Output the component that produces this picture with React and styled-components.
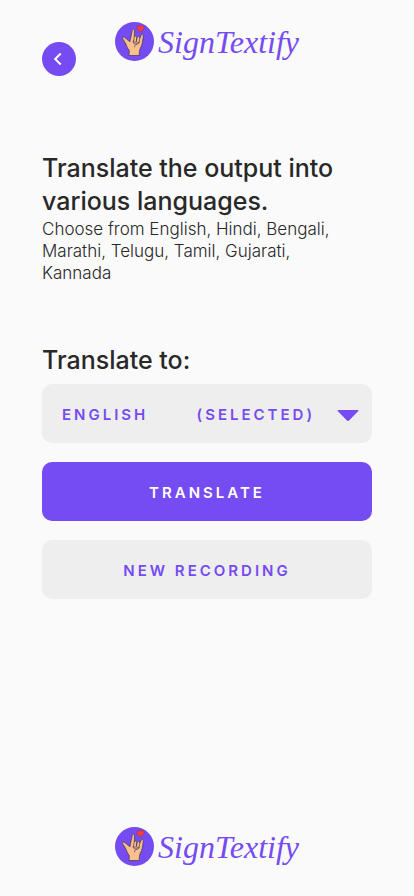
import React from "react";
import styled, { createGlobalStyle } from "styled-components";

const violet = "#754bf2";

const GlobalStyle = createGlobalStyle`
  *, *::before, *::after { box-sizing: border-box; }
  body {
    margin: 0;
    background: #fafafa;
    color: #282828;
    font-family: Inter, "Open Sans", sans-serif;
  }
`;

const Page = styled.div`
  display: flex;
  flex-direction: column;
  min-height: 100vh;
  padding: 22px 42px 30px;
`;

const Header = styled.header`
  display: grid;
  min-height: 54px;
  margin-bottom: 76px;

  > * { grid-area: 1 / 1; }
`;

const BackButton = styled.button`
  display: grid;
  place-items: center;
  align-self: end;
  width: 34px;
  height: 34px;
  padding: 0;
  border: 0;
  border-radius: 50%;
  background: ${violet};
  cursor: pointer;
`;

const Brand = styled.div`
  display: flex;
  align-items: center;
  justify-content: center;
  align-self: start;
  gap: 4px;
  height: 39px;
`;

const Wordmark = styled.span`
  color: ${violet};
  font-family: "Liberation Serif", serif;
  font-size: 32px;
  font-style: italic;
  line-height: 40px;
`;

const Main = styled.main`
  display: flex;
  flex-direction: column;
`;

const Heading = styled.h1`
  margin: 0;
  font-size: 25px;
  font-weight: 500;
  line-height: 33px;
`;

const Description = styled.p`
  margin: 0 0 60px;
  padding-right: 20px;
  font-size: 17px;
  font-weight: 300;
  line-height: 22px;
`;

const FieldLabel = styled.label`
  margin-bottom: 7px;
  font-size: 25px;
  font-weight: 500;
  line-height: 33px;
`;

const Controls = styled.div`
  display: grid;
  gap: 19px;
`;

const Field = styled.div`
  display: grid;
  align-items: center;

  > * { grid-area: 1 / 1; }
`;

const LanguageSelect = styled.select`
  width: 100%;
  height: 59px;
  padding: 2px 20px 0;
  appearance: none;
  border: 0;
  border-radius: 10px;
  background: #eeeeee;
  color: ${violet};
  font: 600 15px/20px Inter, sans-serif;
  letter-spacing: 3px;
  text-transform: uppercase;
  cursor: pointer;
`;

const FieldStatus = styled.div`
  display: flex;
  align-items: center;
  justify-self: end;
  gap: 22px;
  padding: 2px 13px 0 0;
  color: ${violet};
  font-size: 15px;
  font-weight: 600;
  line-height: 20px;
  letter-spacing: 3px;
  pointer-events: none;
`;

const Button = styled.button`
  height: 59px;
  padding: 2px 20px 0;
  border: 0;
  border-radius: 10px;
  background: ${({ $primary }) => ($primary ? violet : "#eeeeee")};
  color: ${({ $primary }) => ($primary ? "#ffffff" : violet)};
  font: 600 15px/20px Inter, sans-serif;
  letter-spacing: 3px;
  text-transform: uppercase;
  cursor: pointer;
`;

const Footer = styled.footer`
  margin-top: auto;
`;

const languages = ["English", "Hindi", "Bengali", "Marathi", "Telugu", "Tamil", "Gujarati", "Kannada"];

function HandMark() {
  return (
    <svg width="39" height="39" viewBox="0 0 39 39" aria-hidden="true">
      <circle cx="19.5" cy="19.5" r="19.5" fill={violet} />
      <path
        d="M14 33.500L14.300 28.500C12.500 26.200 11.700 24.200 10.800 21.800L7.700 16.700C7.100 15.300 8.600 14.500 9.700 15.500L14.900 19.800L17.300 8.300C17.700 6.800 19.600 7.100 19.500 8.500L19.300 14.500C20.200 13.700 21.500 14 22 15C23 14.200 24.500 14.600 24.900 15.900L26.300 12.900C27 11.700 28.600 12.300 28.300 13.700C27.800 17.500 27.600 22.500 25.300 26.200C24.400 28 24.200 30.500 24.300 33.500Z"
        fill="#f7c08d"
        stroke="#4a3048"
        strokeWidth=".7"
        strokeLinejoin="round"
      />
      <path
        d="M19.300 14.500l-.8 4.700c.2 1.500 2.200 1.500 2.700.1l.8-4.300-.5 4.800c.3 1.500 2.300 1.400 2.700 0l.7-3.900M18.300 19c-.7 1.700.2 2.700 1.700 2.900l1.700.2c-1.500.7-2 1.700-2.100 2.800M24.200 19.800c.2 1.600-.7 2.500-2.500 2.300"
        fill="none"
        stroke="#4a3048"
        strokeWidth=".7"
        strokeLinecap="round"
        strokeLinejoin="round"
      />
      <path
        d="M25.500 9.800C23.200 8.900 21.300 7.300 21.900 5.200C22.500 3.300 24.700 3.100 25.500 4.200C26.500 2.600 29 3 29.100 5.300C29.200 7.300 27.400 9 25.500 9.800Z"
        fill="#f23d43"
        stroke="#7d2b58"
        strokeWidth=".4"
      />
    </svg>
  );
}

function Logo() {
  return (
    <Brand>
      <HandMark />
      <Wordmark>SignTextify</Wordmark>
    </Brand>
  );
}

export default function App() {
  return (
    <>
      <GlobalStyle />
      <Page>
        <Header>
          <Logo />
          <BackButton type="button" aria-label="Back">
            <svg width="34" height="34" viewBox="0 0 34 34" aria-hidden="true">
              <path d="M18.700 11.500L13.200 17l5.500 5.500" fill="none" stroke="#fff" strokeWidth="2" />
            </svg>
          </BackButton>
        </Header>
        <Main>
          <Heading>Translate the output into various languages.</Heading>
          <Description>
            Choose from English, Hindi, Bengali, Marathi, Telugu, Tamil, Gujarati, Kannada
          </Description>
          <FieldLabel htmlFor="language">Translate to:</FieldLabel>
          <Controls>
            <Field>
              <LanguageSelect id="language" defaultValue="English">
                {languages.map((name) => (
                  <option key={name}>{name}</option>
                ))}
              </LanguageSelect>
              <FieldStatus>
                <span>(SELECTED)</span>
                <svg width="22" height="14" viewBox="0 0 22 14" aria-hidden="true">
                  <path d="M1 2h20q1 0 .3 1L12.300 12.300q-1.300 1.200-2.600 0L.7 3Q0 2 1 2z" fill={violet} />
                </svg>
              </FieldStatus>
            </Field>
            <Button type="button" $primary>Translate</Button>
            <Button type="button">New recording</Button>
          </Controls>
        </Main>
        <Footer>
          <Logo />
        </Footer>
      </Page>
    </>
  );
}
